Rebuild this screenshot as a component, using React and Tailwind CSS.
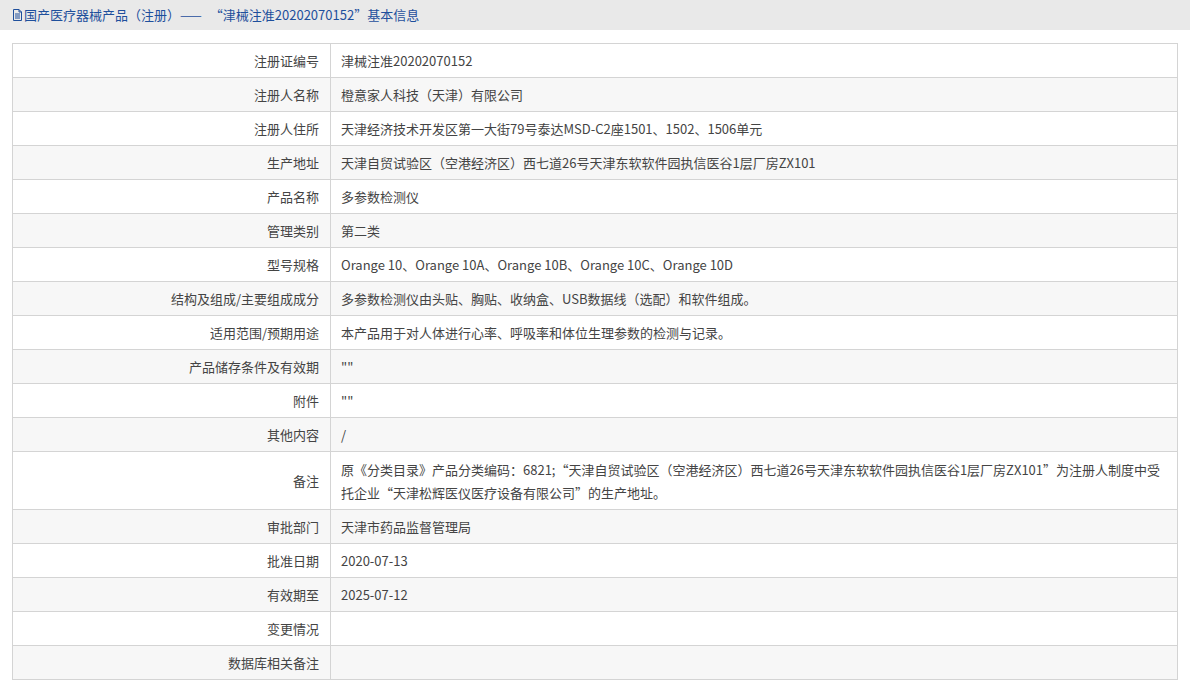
const rows = [
  ["注册证编号", "津械注准20202070152"],
  ["注册人名称", "橙意家人科技（天津）有限公司"],
  ["注册人住所", "天津经济技术开发区第一大街79号泰达MSD-C2座1501、1502、1506单元"],
  ["生产地址", "天津自贸试验区（空港经济区）西七道26号天津东软软件园执信医谷1层厂房ZX101"],
  ["产品名称", "多参数检测仪"],
  ["管理类别", "第二类"],
  ["型号规格", "Orange 10、Orange 10A、Orange 10B、Orange 10C、Orange 10D"],
  ["结构及组成/主要组成成分", "多参数检测仪由头贴、胸贴、收纳盒、USB数据线（选配）和软件组成。"],
  ["适用范围/预期用途", "本产品用于对人体进行心率、呼吸率和体位生理参数的检测与记录。"],
  ["产品储存条件及有效期", "\"\""],
  ["附件", "\"\""],
  ["其他内容", "/"],
  ["备注", "原《分类目录》产品分类编码：6821;“天津自贸试验区（空港经济区）西七道26号天津东软软件园执信医谷1层厂房ZX101”为注册人制度中受托企业“天津松辉医仪医疗设备有限公司”的生产地址。"],
  ["审批部门", "天津市药品监督管理局"],
  ["批准日期", "2020-07-13"],
  ["有效期至", "2025-07-12"],
  ["变更情况", ""],
  ["数据库相关备注", ""],
];

export default function App() {
  return (
    <div className="min-h-[687px] bg-white text-[13px] text-[#444]" style={{ fontFamily: '"Noto Sans CJK SC", "Open Sans", sans-serif' }}>
      <div className="h-[30px] bg-[#e9e9e9] flex items-center px-3 text-[#1e4f9c]">
        <svg width="11" height="12" viewBox="0 0 11 12" className="mr-px">
          <path d="M1.5 0.5h5.5l2.5 2.5v8.5h-8z M7 0.5v2.5h2.5" fill="none" stroke="#1e4f9c" />
          <path d="M3 5h5M3 7h5M3 9h5" stroke="#1e4f9c" />
        </svg>
        <span>国产医疗器械产品（注册）——</span>
        <span className="ml-2 text-[#1e4f9c]">“津械注准20202070152”基本信息</span>
      </div>
      <div className="mx-3 mt-[13px] border border-[#d4d4d4] mr-[12px]">
        {rows.map(([k, v], i) => (
          <div key={k} className={`flex border-t border-[#d4d4d4] first:border-t-0 ${i % 2 ? "bg-[#f7f7f7]" : "bg-white"} ${k === "备注" ? "h-[58px]" : "h-[34px]"} first:h-[33px]`}>
            <div className="w-[318px] shrink-0 pr-[11px] border-r border-[#d4d4d4] flex items-center justify-end">
              {k}
            </div>
            <div className="flex-1 px-[10px] leading-[23px] flex items-center">{v}</div>
          </div>
        ))}
      </div>
    </div>
  );
}
